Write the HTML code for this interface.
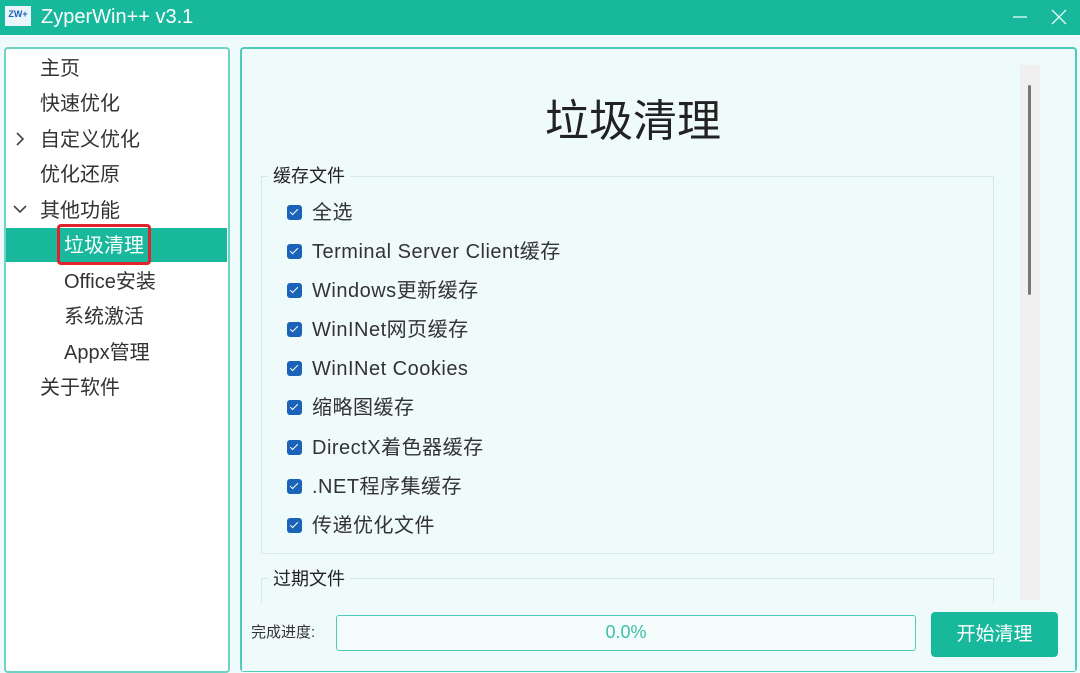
<!DOCTYPE html><html><head><meta charset="utf-8"><style>
*{margin:0;padding:0;box-sizing:border-box}
body{width:1080px;height:673px;background:#effbfa;font-family:"Liberation Sans","Noto Sans CJK SC",sans-serif;position:relative;overflow:hidden;color:#333}
.a{position:absolute;white-space:nowrap}
#tb{left:0;top:0;width:1080px;height:35px;background:#17b89c}
#lp{left:4px;top:47px;width:226px;height:626px;background:#fff;border:2px solid #6fd3c3;border-radius:4px}
#rp{left:240px;top:47px;width:837px;height:625px;background:#effbfa;border:2px solid #4fcbb7;border-radius:4px}
.n{font-size:20px;line-height:24px;color:#333;left:40px;margin-top:1px}
.cb{width:15px;height:15px;background:#1a63b8;border-radius:3px;left:287px}
.cb:after{content:"";position:absolute;left:5px;top:2px;width:3px;height:7px;border:solid #fff;border-width:0 1.5px 1.5px 0;transform:rotate(45deg)}
.ct{left:312px;font-size:20px;line-height:24px;color:#333;letter-spacing:0.5px;margin-top:1px}
</style></head><body>
<div class="a" id="tb"></div>
<div class="a" style="left:5px;top:6px;width:26px;height:20px;background:#eaf4fb;color:#1a63b8;font-size:9px;font-weight:bold;text-align:center;line-height:16px">ZW+</div>
<div class="a" style="left:41px;top:5px;font-size:20px;line-height:24px;color:#fff">ZyperWin++ v3.1</div>
<svg class="a" style="left:1010px;top:8px" width="60" height="20"><path d="M3 9h14" stroke="#e8fbf7" stroke-width="1.3"/><path d="M42 2l14 14M56 2L42 16" stroke="#e8fbf7" stroke-width="1.3"/></svg>
<div class="a" id="lp"></div>
<div class="a" style="left:6px;top:228px;width:221px;height:34px;background:#17b89c"></div>
<div class="a" style="left:57px;top:224px;width:94px;height:41px;border:3px solid #e0242e;border-radius:4px"></div>
<div class="a n" style="top:56px">主页</div>
<div class="a n" style="top:91px">快速优化</div>
<div class="a n" style="top:127px">自定义优化</div>
<div class="a n" style="top:162px">优化还原</div>
<div class="a n" style="top:198px">其他功能</div>
<div class="a n" style="top:233px;left:64px;color:#fff">垃圾清理</div>
<div class="a n" style="top:269px;left:64px">Office安装</div>
<div class="a n" style="top:304px;left:64px">系统激活</div>
<div class="a n" style="top:340px;left:64px">Appx管理</div>
<div class="a n" style="top:375px">关于软件</div>
<svg class="a" style="left:12px;top:131px" width="16" height="90"><path d="M5 2l6 6-6 6" stroke="#444" stroke-width="1.6" fill="none"/><path d="M2 75l6 6 6-6" stroke="#444" stroke-width="1.6" fill="none"/></svg>
<div class="a" id="rp"></div>
<div class="a" style="left:1020px;top:65px;width:20px;height:535px;background:#f0f0f0"></div>
<div class="a" style="left:1028px;top:85px;width:3px;height:210px;background:#777;border-radius:2px"></div>
<div class="a" style="left:545px;top:96px;font-size:44px;line-height:52px;color:#222">垃圾清理</div>
<div class="a" style="left:261px;top:176px;width:733px;height:378px;border:1px solid #d8e6e4"></div>
<div class="a" style="left:268px;top:164px;background:#effbfa;padding:0 5px;font-size:18px;line-height:24px;color:#222">缓存文件</div>
<div class="a" style="left:261px;top:578px;width:733px;height:30px;border:1px solid #d8e6e4;border-bottom:none"></div>
<div class="a" style="left:268px;top:567px;background:#effbfa;padding:0 5px;font-size:18px;line-height:24px;color:#222">过期文件</div>
<div class="a cb" style="top:205px"></div><div class="a ct" style="top:200px">全选</div>
<div class="a cb" style="top:244px"></div><div class="a ct" style="top:239px">Terminal Server Client缓存</div>
<div class="a cb" style="top:283px"></div><div class="a ct" style="top:278px">Windows更新缓存</div>
<div class="a cb" style="top:322px"></div><div class="a ct" style="top:317px">WinINet网页缓存</div>
<div class="a cb" style="top:361px"></div><div class="a ct" style="top:356px">WinINet Cookies</div>
<div class="a cb" style="top:400px"></div><div class="a ct" style="top:395px">缩略图缓存</div>
<div class="a cb" style="top:440px"></div><div class="a ct" style="top:435px">DirectX着色器缓存</div>
<div class="a cb" style="top:479px"></div><div class="a ct" style="top:474px">.NET程序集缓存</div>
<div class="a cb" style="top:518px"></div><div class="a ct" style="top:513px">传递优化文件</div>
<div class="a" style="left:242px;top:603px;width:833px;height:68px;background:#effbfa"></div>
<div class="a" style="left:251px;top:623px;font-size:15px;line-height:20px;color:#333">完成进度:</div>
<div class="a" style="left:336px;top:615px;width:580px;height:36px;border:1.5px solid #4fcbb7;border-radius:3px;background:#f5fdfc;text-align:center;line-height:33px;font-size:18px;color:#3cbfa8">0.0%</div>
<div class="a" style="left:931px;top:612px;width:127px;height:45px;background:#17b89c;border-radius:4px;color:#fff;font-size:19px;text-align:center;line-height:45px">开始清理</div>
</body></html>
